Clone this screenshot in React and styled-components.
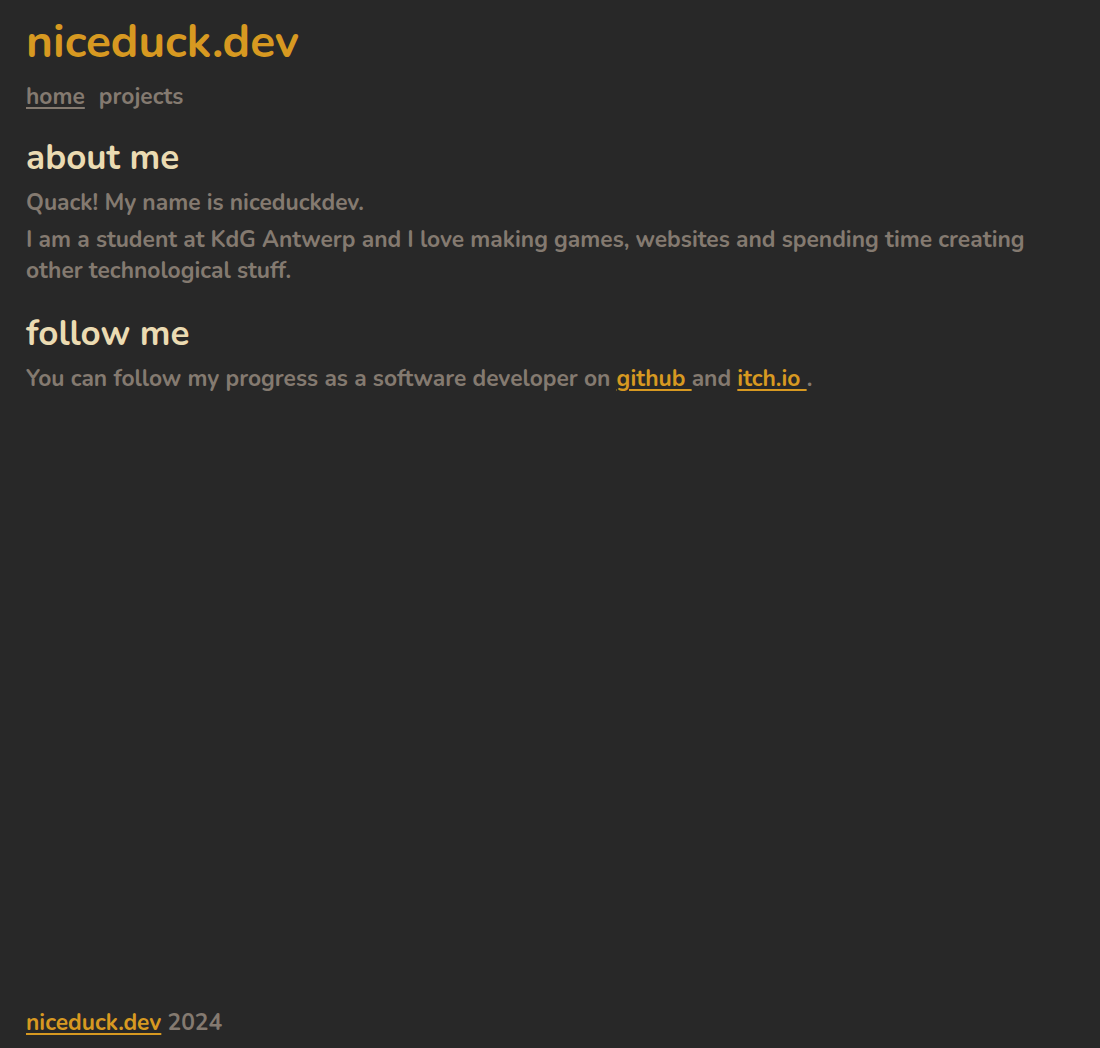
import React from 'react';
import styled, { createGlobalStyle } from 'styled-components';

const GlobalStyle = createGlobalStyle`
    html, body {
        margin: 0;
        padding: 0;
        background-color: #282828;
    }
    body {
        font-family: "Nunito", "Open Sans", "Liberation Sans", sans-serif;
    }
`;

const Page = styled.div`
    min-height: 100vh;
    box-sizing: border-box;
    display: flex;
    flex-direction: column;
    padding: 14px 26px 10px;
`;

const Main = styled.main`
    flex: 1;
`;

const Title = styled.h1`
    margin: 0;
    font-size: 46px;
    line-height: 56px;
    font-weight: 700;
    color: #d79921;
`;

const Nav = styled.nav`
    display: flex;
    gap: 14px;
    margin-top: 11px;
`;

const NavLink = styled.a`
    font-size: 22.8px;
    line-height: 31px;
    font-weight: 700;
    color: #847a70;
    text-decoration: ${(p) => (p.$active ? 'underline' : 'none')};
    text-underline-offset: 3px;
`;

const Heading = styled.h2`
    margin: 0 0 8px;
    font-size: 35px;
    line-height: 42px;
    font-weight: 700;
    color: #ebdbb2;
`;

const Text = styled.p`
    margin: 0;
    font-size: 22.8px;
    line-height: 31px;
    font-weight: 700;
    color: #847a70;

    & + & {
        margin-top: 6px;
    }
`;

const Section = styled.section`
    margin-top: ${(p) => (p.$first ? '25px' : '27px')};
`;

const Link = styled.a`
    color: #d79921;
    font-weight: 700;
    text-decoration: underline;
    text-underline-offset: 3px;
`;

const Footer = styled.footer`
    font-size: 22.8px;
    line-height: 31px;
    font-weight: 700;
    color: #847a70;
`;

export default function App() {
    return (
        <>
            <GlobalStyle />
            <Page>
                <Main>
                    <Title>niceduck.dev</Title>
                    <Nav>
                        <NavLink href="#" $active>home</NavLink>
                        <NavLink href="#">projects</NavLink>
                    </Nav>
                    <Section $first>
                        <Heading>about me</Heading>
                        <Text>Quack! My name is niceduckdev.</Text>
                        <Text>
                            I am a student at KdG Antwerp and I love making games, websites and spending time creating other technological stuff.
                        </Text>
                    </Section>
                    <Section>
                        <Heading>follow me</Heading>
                        <Text>
                            You can follow my progress as a software developer on <Link href="#">github </Link>and <Link href="#">itch.io </Link>.
                        </Text>
                    </Section>
                </Main>
                <Footer>
                    <Link href="#">niceduck.dev</Link> 2024
                </Footer>
            </Page>
        </>
    );
}
